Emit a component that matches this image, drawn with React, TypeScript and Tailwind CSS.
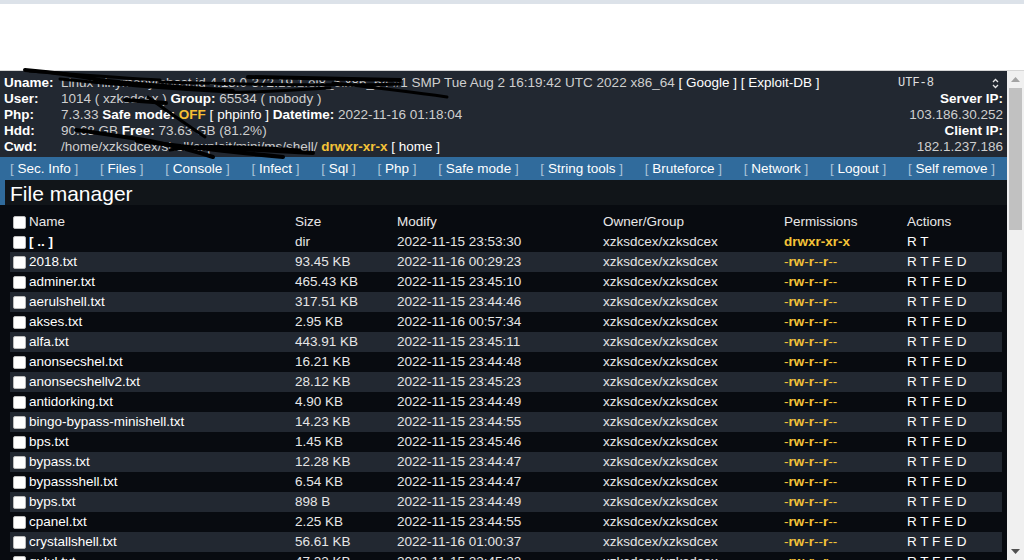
import React from 'react';

type Row = { name: string; size: string; modify: string; perms: string; actions: string; bold?: boolean };

const rows: Row[] = [
    { name: '[ .. ]', size: 'dir', modify: '2022-11-15 23:53:30', perms: 'drwxr-xr-x', actions: 'R T', bold: true },
    { name: '2018.txt', size: '93.45 KB', modify: '2022-11-16 00:29:23', perms: '-rw-r--r--', actions: 'R T F E D' },
    { name: 'adminer.txt', size: '465.43 KB', modify: '2022-11-15 23:45:10', perms: '-rw-r--r--', actions: 'R T F E D' },
    { name: 'aerulshell.txt', size: '317.51 KB', modify: '2022-11-15 23:44:46', perms: '-rw-r--r--', actions: 'R T F E D' },
    { name: 'akses.txt', size: '2.95 KB', modify: '2022-11-16 00:57:34', perms: '-rw-r--r--', actions: 'R T F E D' },
    { name: 'alfa.txt', size: '443.91 KB', modify: '2022-11-15 23:45:11', perms: '-rw-r--r--', actions: 'R T F E D' },
    { name: 'anonsecshel.txt', size: '16.21 KB', modify: '2022-11-15 23:44:48', perms: '-rw-r--r--', actions: 'R T F E D' },
    { name: 'anonsecshellv2.txt', size: '28.12 KB', modify: '2022-11-15 23:45:23', perms: '-rw-r--r--', actions: 'R T F E D' },
    { name: 'antidorking.txt', size: '4.90 KB', modify: '2022-11-15 23:44:49', perms: '-rw-r--r--', actions: 'R T F E D' },
    { name: 'bingo-bypass-minishell.txt', size: '14.23 KB', modify: '2022-11-15 23:44:55', perms: '-rw-r--r--', actions: 'R T F E D' },
    { name: 'bps.txt', size: '1.45 KB', modify: '2022-11-15 23:45:46', perms: '-rw-r--r--', actions: 'R T F E D' },
    { name: 'bypass.txt', size: '12.28 KB', modify: '2022-11-15 23:44:47', perms: '-rw-r--r--', actions: 'R T F E D' },
    { name: 'bypassshell.txt', size: '6.54 KB', modify: '2022-11-15 23:44:47', perms: '-rw-r--r--', actions: 'R T F E D' },
    { name: 'byps.txt', size: '898 B', modify: '2022-11-15 23:44:49', perms: '-rw-r--r--', actions: 'R T F E D' },
    { name: 'cpanel.txt', size: '2.25 KB', modify: '2022-11-15 23:44:55', perms: '-rw-r--r--', actions: 'R T F E D' },
    { name: 'crystallshell.txt', size: '56.61 KB', modify: '2022-11-16 01:00:37', perms: '-rw-r--r--', actions: 'R T F E D' },
    { name: 'gulul.txt', size: '47.23 KB', modify: '2022-11-15 23:45:22', perms: '-rw-r--r--', actions: 'R T F E D' },
];

const menu = ['Sec. Info', 'Files', 'Console', 'Infect', 'Sql', 'Php', 'Safe mode', 'String tools', 'Bruteforce', 'Network', 'Logout', 'Self remove'];

function Box() {
    return <span className="inline-block w-[13px] h-[13px] shrink-0 bg-white rounded-[2px] border border-[#bdbdbd]" />;
}

function Perms({ value, all }: { value: string; all?: boolean }) {
    return (
        <span className="text-[#f4c338]">
            {value.split('').map((c, i) => (
                <span key={i} className={all || c !== '-' ? 'font-bold' : ''}>{c}</span>
            ))}
        </span>
    );
}

function Link({ children }: { children: React.ReactNode }) {
    return <span className="text-white">[ {children} ]</span>;
}

export default function App() {
    return (
        <div className="relative w-[1024px] h-[560px] overflow-hidden bg-white text-[13.5px] leading-[16px]" style={{ fontFamily: '"Liberation Sans", Arial, sans-serif' }}>
            {/* browser chrome leftovers */}
            <div className="h-[4px] bg-[#dce2e9]" />
            <div className="h-[67px] bg-white border-b border-[#d6d6d6]" />

            <div className="flex">
                <div className="w-[1007px]">
                    {/* info header */}
                    <div className="bg-[#222831] flex justify-between pl-[4px] pr-[4px] pt-[4px] pb-[2px]">
                        <div className="grid grid-cols-[57px_1fr]">
                            <b className="text-white">Uname:</b>
                            <span className="text-[#cfcfcf] whitespace-nowrap">Linux ninymanymhost.id 4.18.0-372.19.1.el8_6.x86_64 #1 SMP Tue Aug 2 16:19:42 UTC 2022 x86_64 <Link>Google</Link> <Link>Exploit-DB</Link></span>
                            <b className="text-white">User:</b>
                            <span className="text-[#cfcfcf]">1014 ( xzksdcex ) <b className="text-white">Group:</b> 65534 ( nobody )</span>
                            <b className="text-white">Php:</b>
                            <span className="text-[#cfcfcf]">7.3.33 <b className="text-white">Safe mode:</b> <b className="text-[#f7c034]">OFF</b> <Link>phpinfo</Link> <b className="text-white">Datetime:</b> 2022-11-16 01:18:04</span>
                            <b className="text-white">Hdd:</b>
                            <span className="text-[#cfcfcf]">90.68 GB <b className="text-white">Free:</b> 73.63 GB (81.2%)</span>
                            <b className="text-white">Cwd:</b>
                            <span className="text-[#cfcfcf]">/home/xzksdcex/shell/exploit/mini/ms/shell/ <Perms value="drwxr-xr-x" all /> <Link>home</Link></span>
                        </div>
                        <div className="flex flex-col items-end">
                            <div className="w-[105px] flex items-center justify-between text-[#e0e0e0] text-[12px] pr-[4px]" style={{ fontFamily: '"Liberation Mono", "Courier New", monospace' }}>
                                <span>UTF-8</span>
                                <svg width="7" height="11" viewBox="0 0 7 11" fill="none" stroke="#e6e6e6" strokeWidth="1.3">
                                    <path d="M1 4 L3.5 1.5 L6 4" />
                                    <path d="M1 7 L3.5 9.5 L6 7" />
                                </svg>
                            </div>
                            <b className="text-white">Server IP:</b>
                            <span className="text-[#cfcfcf]">103.186.30.252</span>
                            <b className="text-white">Client IP:</b>
                            <span className="text-[#cfcfcf]">182.1.237.186</span>
                        </div>
                    </div>

                    {/* menu */}
                    <div className="h-[23px] bg-[#306b9c] flex items-center justify-between pl-[10px] pr-[12px]">
                        {menu.map((m) => (
                            <span key={m} className="text-[#aac3d8] whitespace-nowrap">[ <span className="text-white">{m}</span> ]</span>
                        ))}
                    </div>

                    {/* title */}
                    <div className="h-[25px] bg-[#306b9c] flex">
                        <div className="ml-[5px] flex-1 bg-[#111519] flex items-center pl-[5px] pt-[1px] text-white text-[21px] leading-[25px]">File manager</div>
                    </div>

                    {/* files */}
                    <div className="bg-[#080b10] pt-[7px] pl-[10px] pr-[5px] pb-[10px]">
                        <div className="grid grid-cols-[285px_102px_206px_181px_123px_1fr] h-[20px] items-center text-[#e8e8e8]">
                            <div className="flex items-center gap-[3px] pl-[3px]"><Box />Name</div>
                            <div>Size</div>
                            <div>Modify</div>
                            <div>Owner/Group</div>
                            <div>Permissions</div>
                            <div>Actions</div>
                        </div>
                        {rows.map((r, i) => (
                            <div key={r.name} className={`grid grid-cols-[285px_102px_206px_181px_123px_1fr] h-[20px] items-center text-[#e6e6e6] ${i % 2 === 1 ? 'bg-[#222831]' : ''}`}>
                                <div className="flex items-center gap-[3px] pl-[3px] text-white">
                                    <Box />
                                    {r.bold ? <b>{r.name}</b> : <span>{r.name}</span>}
                                </div>
                                <div>{r.size}</div>
                                <div>{r.modify}</div>
                                <div>xzksdcex/xzksdcex</div>
                                <div><Perms value={r.perms} all={r.bold} /></div>
                                <div className="text-white">{r.actions}</div>
                            </div>
                        ))}
                    </div>
                </div>

                {/* scrollbar */}
                <div className="w-[17px] h-[489px] bg-[#f0f0f0] flex flex-col items-center">
                    <div className="h-[17px] flex items-center justify-center">
                        <svg width="9" height="5" viewBox="0 0 9 5"><path d="M0 5 L4.5 0 L9 5 Z" fill="#a3a3a3" /></svg>
                    </div>
                    <div className="w-[13px] h-[142px] bg-[#c1c1c1]" />
                    <div className="flex-1" />
                    <div className="h-[17px] flex items-center justify-center">
                        <svg width="9" height="5" viewBox="0 0 9 5"><path d="M0 0 L4.5 5 L9 0 Z" fill="#505050" /></svg>
                    </div>
                </div>
            </div>

            {/* marker scribbles over redacted bits */}
            <svg className="absolute left-0 top-0 pointer-events-none" width="1024" height="560" fill="none" stroke="#000" strokeLinecap="round" strokeLinejoin="round">
                <path d="M25 70 C50 72 80 76 100 80 C150 86 200 88 233 91" strokeWidth="4" />
                <path d="M30 71 C70 74 120 78 160 80" strokeWidth="3" />
                <path d="M60 79 C110 84 170 89 230 92 C260 93 290 90 330 88" strokeWidth="3" />
                <path d="M248 77 C300 78 350 79 400 80" strokeWidth="4" />
                <path d="M333 83 C380 88 420 93 447 97" strokeWidth="3" />
                <path d="M160 82 C230 84 330 86 400 84" strokeWidth="3" />
                <path d="M125 100 C140 101 152 102 166 103" strokeWidth="4" />
                <path d="M148 97 C160 106 180 120 205 137" strokeWidth="3" />
                <path d="M76 130 C100 133 125 137 150 141 C175 146 195 151 213 157" strokeWidth="4" />
                <path d="M137 141 C180 146 230 152 283 157" strokeWidth="4" />
                <path d="M200 147 C240 149 280 151 313 153" strokeWidth="4" />
                <path d="M170 150 C200 145 240 146 300 150" strokeWidth="3" />
            </svg>
        </div>
    );
}
